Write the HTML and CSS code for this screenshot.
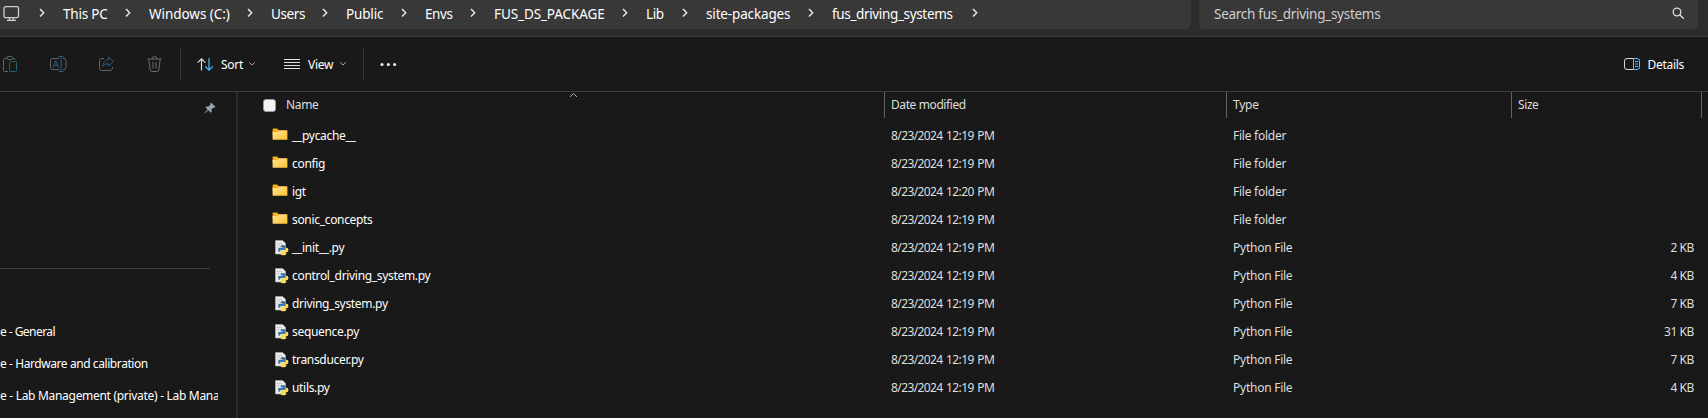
FILE: index.html
```
<!DOCTYPE html>
<html lang="en">
<head>
<meta charset="utf-8">
<title>fus_driving_systems</title>
<link rel="stylesheet" href="styles.css">
</head>
<body>
<svg width="0" height="0" class="defs">
  <defs>
    <linearGradient id="gold" x1="0" y1="0" x2="1" y2="1"><stop offset="0" stop-color="#ffe39b"/><stop offset="1" stop-color="#fdc02c"/></linearGradient>
    <symbol id="chev" viewBox="0 0 6 10"><path d="M1 1l3.700 3.800L1 8.600" fill="none" stroke="#e4e4e4" stroke-width="1.500"/></symbol>
    <symbol id="down" viewBox="0 0 8 6"><path d="M1.200 1.400L4 4.100l2.800-2.700" fill="none" stroke="#a8a8a8"/></symbol>
    <symbol id="folder" viewBox="0 0 16 13"><path d="M.6 1.600Q.6.6 1.600.6h3.600l1.400 1.600h8V7H.6z" fill="#f8b015"/><path d="M.6 4h5l1.200-1.400h8.600v9.100H.6z" fill="url(#gold)"/></symbol>
    <symbol id="py" viewBox="0 0 14 16"><path d="M.5.5h7L10.500 3.200v10.800H.5z" fill="#ececec" stroke="#b5b5b5" stroke-width=".6"/><path d="M2 3.500h5M2 5.500h2.500M2 7.500h1" stroke="#c7c7c7"/><path d="M5.600 6Q5.600 5.100 7.800 5.100q2.600 0 2.600 1.400v2.200q0 1.300-1.400 1.300H6.300Q4.900 10 4.900 11.700H4.300Q3 11.700 3 9.700t1.400-2h3v-.6H5.600z" fill="#3b78ab"/><path d="M10.900 7.800h.9Q13.400 7.800 13.400 9.900t-1.700 2.400H9.200v.6h2.100v.9q0 1.500-2.700 1.500-3 0-3-1.500v-1.900q0-1.300 1.500-1.300h2.200q1.600 0 1.600-1.400z" fill="#ffdc4d"/></symbol>
  </defs>
</svg>
<div class="window">
  <header class="address">
    <nav class="crumbs">
      <svg class="pc" width="17" height="17" viewBox="0 0 17 17" fill="none" stroke="#cfcfcf" stroke-width="1.300"><rect x="1" y="1.700" width="14.500" height="11" rx="1.800"/><path d="M4 15.400h9M6.500 13v2M10.200 13v2"/></svg>
      <svg class="sep"><use href="#chev"/></svg><span class="c1">This PC</span>
      <svg class="sep"><use href="#chev"/></svg><span class="c2">Windows (C:)</span>
      <svg class="sep"><use href="#chev"/></svg><span class="c3">Users</span>
      <svg class="sep"><use href="#chev"/></svg><span class="c4">Public</span>
      <svg class="sep"><use href="#chev"/></svg><span class="c5">Envs</span>
      <svg class="sep"><use href="#chev"/></svg><span class="c6">FUS_DS_PACKAGE</span>
      <svg class="sep"><use href="#chev"/></svg><span class="c7">Lib</span>
      <svg class="sep"><use href="#chev"/></svg><span class="c8">site-packages</span>
      <svg class="sep"><use href="#chev"/></svg><span class="c9">fus_driving_systems</span>
      <svg class="sep"><use href="#chev"/></svg>
    </nav>
    <div class="search"><span>Search fus_driving_systems</span>
      <svg width="13" height="13" viewBox="0 0 13 13" fill="none" stroke="#dedede" stroke-width="1.300"><circle cx="5" cy="5" r="3.800"/><path d="M7.800 7.800l4 4"/></svg>
    </div>
  </header>

  <div class="toolbar">
    <svg class="paste" width="15" height="17" viewBox="0 0 15 17" fill="none" stroke="#636363"><path d="M4 2.500H1.500q-1 0-1 1v11q0 1 1 1H5M9.500 2.500H11q1 0 1 1V4M4 1.500q0-1 1-1h3.500q1 0 1 1v1q0 1-1 1H5q-1 0-1-1z"/><rect x="6.500" y="5.500" width="7" height="10" rx="1" stroke="#2b5d7c"/></svg>
    <svg class="rename" width="17" height="17" viewBox="0 0 17 17" fill="none" stroke="#636363"><path d="M9 2.500H2.500q-2 0-2 2v7q0 2 2 2H9M13 2.500h1q2 0 2 2v7q0 2-2 2h-1"/><path d="M3 11.500l2.800-7 2.800 7M4 9.200h3.600M8.500.5h5M8.500 15.500h5M11 .5v15" stroke="#2b5d7c"/></svg>
    <svg class="share" width="16" height="16" viewBox="0 0 16 16" fill="none" stroke="#636363"><path d="M5 2.500H3Q.5 2.500.5 5v7q0 2.500 2.500 2.500h8q2.500 0 2.500-2.500v-1"/><path d="M9.500 1l5 4.500-5 4.500V7.600Q6 7.500 3.800 10.500 4.500 4 9.500 3.500z" stroke="#2b5d7c"/></svg>
    <svg class="trash" width="15" height="17" viewBox="0 0 15 17" fill="none" stroke="#6c6c6c"><path d="M.5 3h14M5 3q0-2.500 2.500-2.500T10 3M1.800 3.200l1.400 11q.2 1.300 1.500 1.300h5.600q1.300 0 1.500-1.300l1.400-11M6 6v6.500M9 6v6.500"/></svg>
    <i class="bar b1"></i>
    <svg class="sort" width="17" height="13" viewBox="0 0 17 13" fill="none" stroke-width="1.200"><path d="M4.500 12.500V1M.7 4.700L4.500.9l3.800 3.800" stroke="#dcdcdc"/><path d="M12 .3V12M8.200 8.300L12 12.100l3.800-3.800" stroke="#4cc2ff"/></svg>
    <span class="sortt">Sort</span><svg class="down"><use href="#down"/></svg>
    <svg class="lines" width="16" height="11" viewBox="0 0 16 11"><path d="M0 .5h16M0 3.500h16M0 6.500h16M0 9.500h16" stroke="#e2e2e2"/></svg>
    <span class="viewt">View</span><svg class="down"><use href="#down"/></svg>
    <i class="bar b2"></i>
    <svg class="dots" width="17" height="5" viewBox="0 0 17 5" fill="#f4f4f4"><circle cx="2" cy="2.500" r="1.500"/><circle cx="8.300" cy="2.500" r="1.500"/><circle cx="14.600" cy="2.500" r="1.500"/></svg>
    <div class="details"><svg width="16" height="13" viewBox="0 0 16 13" fill="none"><path d="M9.500.5H3Q.5.5.5 3v6q0 2.500 2.500 2.500h6.500" stroke="#d8d8d8"/><path d="M9.500.5H13q2.500 0 2.500 2.500v6q0 2.500-2.500 2.500H9.500zM11 3.500h3M11 6h3M11 8.500h3" stroke="#4cc2ff"/></svg><span>Details</span></div>
  </div>

  <main class="content">
    <aside class="side">
      <svg class="pin" width="12" height="12" viewBox="0 0 12 12"><path d="M7 .4L11.500 5l-1.200.7-.8-.1-2 2 .2 2.200-.9.900L4.400 8.300.7 11.600.3 11.200 3.600 7.500 1.300 5.200l1-.8 2.200.2 2-2-.2-.9z" fill="#9ba3aa"/></svg>
      <hr>
      <p class="n1">e - General</p><p class="n2">e - Hardware and calibration</p><p class="n3">e - Lab Management (private) - Lab Mana</p>
    </aside>
    <section class="files">
      <div class="row head">
        <div class="name"><i class="check"></i><span>Name</span><svg class="asc" width="9" height="6" viewBox="0 0 9 6"><path d="M1 5l3.500-3.500L8 5" fill="none" stroke="#aaa"/></svg></div>
        <div class="date">Date modified</div><div class="type">Type</div><div class="size">Size</div>
      </div>
      <div class="row"><div class="name"><svg class="fold"><use href="#folder"/></svg><span>__pycache__</span></div><div class="date">8/23/2024 12:19 PM</div><div class="type">File folder</div><div class="size"></div></div>
      <div class="row"><div class="name"><svg class="fold"><use href="#folder"/></svg><span>config</span></div><div class="date">8/23/2024 12:19 PM</div><div class="type">File folder</div><div class="size"></div></div>
      <div class="row"><div class="name"><svg class="fold"><use href="#folder"/></svg><span>igt</span></div><div class="date">8/23/2024 12:20 PM</div><div class="type">File folder</div><div class="size"></div></div>
      <div class="row"><div class="name"><svg class="fold"><use href="#folder"/></svg><span>sonic_concepts</span></div><div class="date">8/23/2024 12:19 PM</div><div class="type">File folder</div><div class="size"></div></div>
      <div class="row"><div class="name"><svg class="py"><use href="#py"/></svg><span>__init__.py</span></div><div class="date">8/23/2024 12:19 PM</div><div class="type">Python File</div><div class="size">2 KB</div></div>
      <div class="row"><div class="name"><svg class="py"><use href="#py"/></svg><span>control_driving_system.py</span></div><div class="date">8/23/2024 12:19 PM</div><div class="type">Python File</div><div class="size">4 KB</div></div>
      <div class="row"><div class="name"><svg class="py"><use href="#py"/></svg><span>driving_system.py</span></div><div class="date">8/23/2024 12:19 PM</div><div class="type">Python File</div><div class="size">7 KB</div></div>
      <div class="row"><div class="name"><svg class="py"><use href="#py"/></svg><span>sequence.py</span></div><div class="date">8/23/2024 12:19 PM</div><div class="type">Python File</div><div class="size">31 KB</div></div>
      <div class="row"><div class="name"><svg class="py"><use href="#py"/></svg><span>transducer.py</span></div><div class="date">8/23/2024 12:19 PM</div><div class="type">Python File</div><div class="size">7 KB</div></div>
      <div class="row"><div class="name"><svg class="py"><use href="#py"/></svg><span>utils.py</span></div><div class="date">8/23/2024 12:19 PM</div><div class="type">Python File</div><div class="size">4 KB</div></div>
    </section>
  </main>
</div>
</body>
</html>
```
FILE: styles.css
```
* { box-sizing: border-box; }
body { margin: 0; background: #191919; color: #fff; font: 12px/16px "Noto Sans", "Open Sans", sans-serif; overflow: hidden; }
.defs { display: block; }
svg { display: block; flex: none; }
.window { height: 418px; display: flex; flex-direction: column; white-space: nowrap; }
.address { height: 37px; flex: none; display: flex; gap: 8px; background: #2c2c2c; border-bottom: 1px solid #3d3d3d; font-size: 13.500px; }
.crumbs { width: 1191px; height: 29px; background: #383838; border-radius: 0 0 5px 0; display: flex; align-items: center; padding: 0 0 3px 3px; letter-spacing: -.4px; }
.crumbs span { flex: none; padding-top: 1px; }
.crumbs .pc { margin-right: 19px; }
.sep { width: 6px; height: 10px; margin-right: 18px; }
.c1 { width: 62px; letter-spacing: -.2px; }
.c2 { width: 98px; letter-spacing: -.05px; }
.c3 { width: 51px; }
.c4 { width: 55px; letter-spacing: -.15px; }
.c5 { width: 45px; }
.c6 { width: 128px; letter-spacing: -.1px; }
.c7 { width: 36px; }
.c8 { width: 102px; letter-spacing: -.15px; }
.c9 { width: 140px; letter-spacing: -.35px; }
.crumbs span { margin-right: 0; }
.crumbs .c1, .crumbs .c2, .crumbs .c3, .crumbs .c4, .crumbs .c5, .crumbs .c6, .crumbs .c7, .crumbs .c8, .crumbs .c9 { box-sizing: border-box; }
.crumbs .c2 { width: 98px; }
.search { width: 499px; height: 29px; background: #383838; border-radius: 0 0 5px 5px; display: flex; align-items: center; justify-content: space-between; padding: 0 13px 3px 15px; color: #cfcfcf; letter-spacing: -.27px; }
.search span { padding-top: 1px; }

.toolbar { height: 55px; flex: none; display: flex; align-items: center; border-bottom: 1px solid #3d3d3d; padding-left: 3px; letter-spacing: -.3px; }
.toolbar span { padding-top: 2px; }
.rename { margin-left: 32px; }
.share { margin-left: 32px; }
.trash { margin-left: 32px; }
.bar { width: 1px; height: 32px; background: #353535; }
.b1 { margin-left: 18px; }
.sort { margin-left: 16px; }
.sortt { margin-left: 7px; width: 27px; }
.down { width: 8px; height: 6px; }
.lines { margin-left: 28px; }
.viewt { margin-left: 8px; width: 31px; }
.b2 { margin-left: 16px; }
.dots { margin-left: 16px; }
.details { margin-left: auto; padding-right: 24px; display: flex; align-items: center; gap: 8px; }

.content { flex: 1; display: flex; min-height: 0; }
.side { width: 238px; border-right: 2px solid #2b2b2b; padding-top: 10px; flex: none; }
.side .pin { margin-left: 204px; }
.side hr { border: 0; height: 1px; width: 210px; background: #3f3f3f; margin: 154px 0 0; }
.side p { margin: 0 0 16px; width: 218px; overflow: hidden; letter-spacing: -.3px; }
.side hr + p { margin-top: 55px; }
.side .n1 { letter-spacing: -.55px; }
.side .n2 { letter-spacing: -.42px; }

.files { flex: 1; display: flex; flex-direction: column; }
.row { height: 28px; display: grid; grid-template-columns: 646px 342px 285px 191px; align-items: center; color: #dedede; letter-spacing: -.4px; }
.row .name { display: flex; align-items: center; padding-left: 34px; color: #fff; letter-spacing: -.32px; }
.row .date, .row .type { padding-left: 7px; }
.row .date { letter-spacing: -.6px; word-spacing: 1px; }
.row .type { letter-spacing: -.25px; }
.row .size { text-align: right; padding-right: 8px; }
.head { height: 25px; margin: 0 0 5px; align-items: stretch; line-height: 26px; }
.head .name { padding-left: 25px; color: #dedede; position: relative; }
.head .date, .head .type, .head .size { border-left: 1px solid #636363; padding-left: 6px; }
.head .date { letter-spacing: -.4px; word-spacing: 0; }
.head .size { text-align: left; border-right: 1px solid #636363; }
.check { width: 13px; height: 13px; border: 1px solid #999; border-radius: 3px; background: #f3f3f3; margin-right: 10px; }
.asc { position: absolute; left: 331px; top: 0; }
.fold { width: 16px; height: 13px; margin-right: 4px; margin-top: -3px; }
.py { width: 14px; height: 16px; margin: -1px 3px 0; }
```
